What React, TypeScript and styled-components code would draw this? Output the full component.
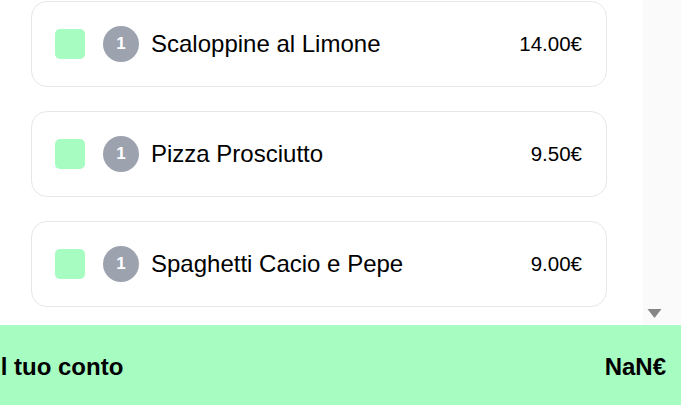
import React from "react";
import styled, { createGlobalStyle } from "styled-components";

const Global = createGlobalStyle`
  html, body { margin: 0; padding: 0; background: #ffffff; overflow: hidden; }
  body { font-family: "Liberation Sans", Arial, sans-serif; color: #000; }
`;

const Page = styled.div`
  width: 681px;
  height: 405px;
  display: flex;
  flex-direction: column;
`;

const Body = styled.div`
  flex: 1;
  min-height: 0;
  display: flex;
`;

const List = styled.div`
  flex: 1;
  overflow: hidden;
  padding: 1px 0 0 31px;
  display: flex;
  flex-direction: column;
  gap: 24px;
`;

const Card = styled.div`
  box-sizing: border-box;
  width: 576px;
  flex-shrink: 0;
  border: 1px solid #e5e7eb;
  border-radius: 16px;
  background: #fff;
  padding: 24px 24px 24px 23px;
  display: flex;
  align-items: center;
`;

const Check = styled.div`
  width: 30px;
  height: 30px;
  border-radius: 5px;
  background: #a7fcc1;
  margin-right: 18px;
  flex-shrink: 0;
`;

const Qty = styled.div`
  width: 36px;
  height: 36px;
  border-radius: 50%;
  background: #9ca3af;
  color: #fff;
  font-weight: 700;
  font-size: 17px;
  display: flex;
  align-items: center;
  justify-content: center;
  margin-right: 12px;
  flex-shrink: 0;
`;

const Name = styled.div`
  flex: 1;
  font-size: 24px;
  line-height: 28px;
`;

const Price = styled.div`
  font-size: 20.5px;
  line-height: 24px;
`;

const Rail = styled.div`
  width: 38px;
  background: #fafafa;
  display: flex;
  flex-direction: column;
  justify-content: flex-end;
  align-items: flex-start;
  padding: 0 0 6px 4px;
  box-sizing: border-box;
`;

const Footer = styled.div`
  height: 80px;
  box-sizing: border-box;
  padding: 3px 15px 0 0;
  background: #a7fcc1;
  display: flex;
  align-items: center;
  justify-content: space-between;
  font-weight: 700;
  font-size: 24px;
`;

const FooterLabel = styled.span`
  margin-left: -6px;
`;

const items = [
  { name: "Scaloppine al Limone", price: "14.00€" },
  { name: "Pizza Prosciutto", price: "9.50€" },
  { name: "Spaghetti Cacio e Pepe", price: "9.00€" },
];

export default function App() {
  return (
    <>
      <Global />
      <Page>
        <Body>
          <List>
            {items.map((it) => (
              <Card key={it.name}>
                <Check />
                <Qty>1</Qty>
                <Name>{it.name}</Name>
                <Price>{it.price}</Price>
              </Card>
            ))}
          </List>
          <Rail>
            <svg width="15" height="11" viewBox="0 0 15 11">
              <polygon points="0.5,1 14.5,1 7.5,10" fill="#858585" />
            </svg>
          </Rail>
        </Body>
        <Footer>
          <FooterLabel>Il tuo conto</FooterLabel>
          <span>NaN€</span>
        </Footer>
      </Page>
    </>
  );
}
